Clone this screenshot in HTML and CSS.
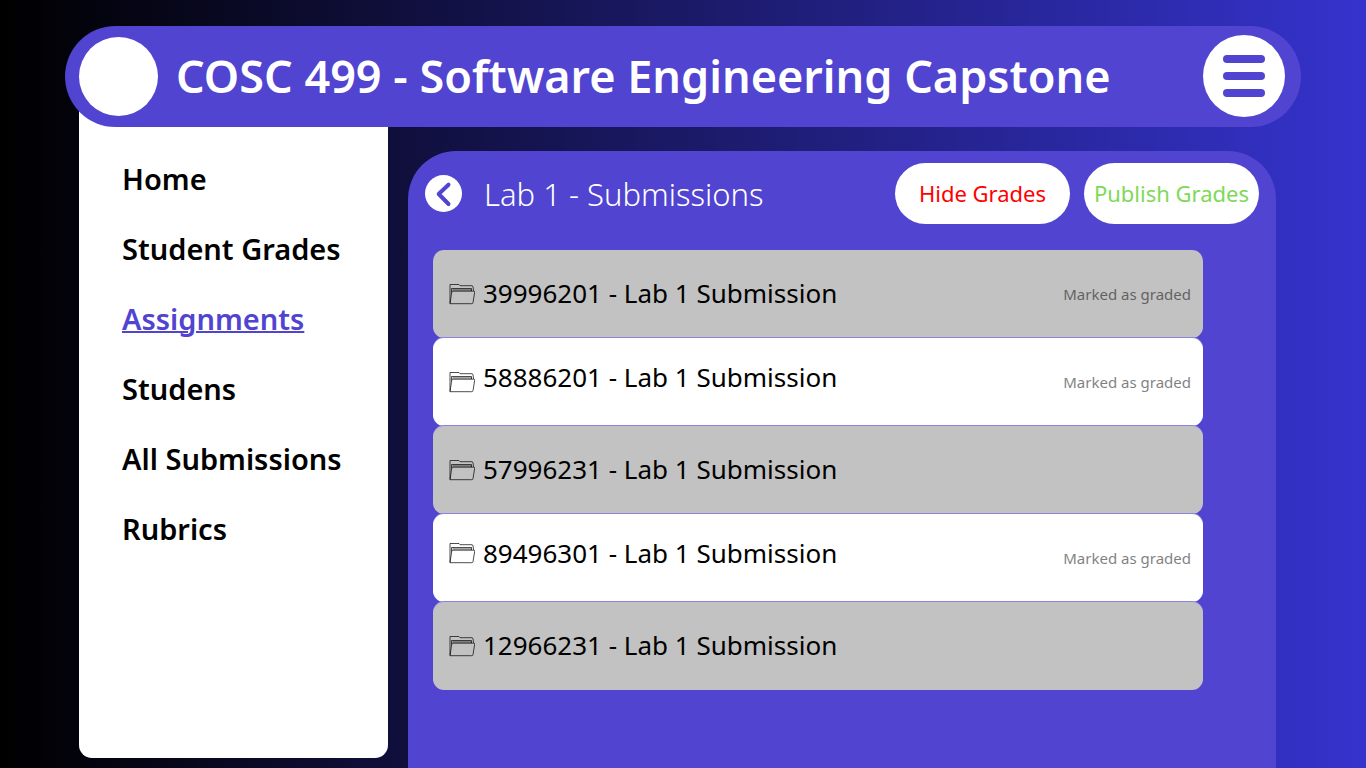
FILE: index.html
```html
<!DOCTYPE html>
<html lang="en">
<head>
<meta charset="utf-8">
<meta name="viewport" content="width=device-width, initial-scale=1">
<title>COSC 499 - Software Engineering Capstone</title>
<link rel="stylesheet" href="styles.css">
</head>
<body>
<svg class="sprite" aria-hidden="true">
  <symbol id="folder" viewBox="0 0 26 22">
    <g fill="none" stroke="currentColor" stroke-width="0.7" stroke-linejoin="round">
      <path d="M1 20.500V1.500H10l1 1.200h12q1 .2 1 1.200L24.600 8"/>
      <path d="M2.500 9.500V5.500h20V8"/>
      <path d="M3.500 7h19"/>
      <path d="M1 20.600 2.800 9q.2-.8 1-.8h21q1.100 0 .9 1L24 19.700q-.3 1-1.200 1H1"/>
    </g>
  </symbol>
</svg>
<header class="topbar">
  <span class="avatar"></span>
  <h1 class="title">COSC 499 - Software Engineering Capstone</h1>
  <button class="menu" type="button" aria-label="Menu">
    <span class="bar"></span><span class="bar"></span><span class="bar"></span>
  </button>
</header>
<div class="layout">
  <nav class="sidebar">
    <a class="link" href="#">Home</a>
    <a class="link" href="#">Student Grades</a>
    <a class="link link-active" href="#">Assignments</a>
    <a class="link" href="#">Studens</a>
    <a class="link" href="#">All Submissions</a>
    <a class="link" href="#">Rubrics</a>
  </nav>
  <main class="panel">
    <div class="panel-head">
      <button class="back" type="button" aria-label="Back">
        <svg viewBox="0 0 36 36" width="36" height="36"><path d="M22.500 8.700 12.700 18 22.500 28" fill="none" stroke="#5144d0" stroke-width="4" stroke-linecap="round" stroke-linejoin="round"/></svg>
      </button>
      <h2 class="subtitle">Lab 1 - Submissions</h2>
      <div class="actions">
        <button class="pill pill-hide" type="button">Hide Grades</button>
        <button class="pill pill-publish" type="button">Publish Grades</button>
      </div>
    </div>
    <ul class="list">
      <li class="row"><svg class="folder"><use href="#folder"/></svg><span class="name">39996201 - Lab 1 Submission</span><span class="status">Marked as graded</span></li>
      <li class="row row-light"><svg class="folder"><use href="#folder"/></svg><span class="name">58886201 - Lab 1 Submission</span><span class="status">Marked as graded</span></li>
      <li class="row"><svg class="folder"><use href="#folder"/></svg><span class="name">57996231 - Lab 1 Submission</span></li>
      <li class="row row-light row-raised"><svg class="folder"><use href="#folder"/></svg><span class="name">89496301 - Lab 1 Submission</span><span class="status">Marked as graded</span></li>
      <li class="row"><svg class="folder"><use href="#folder"/></svg><span class="name">12966231 - Lab 1 Submission</span></li>
    </ul>
  </main>
</div>
</body>
</html>
```
FILE: styles.css
```css
* { box-sizing: border-box; }
body {
  margin: 0;
  padding: 26px 65px 0;
  min-height: 100vh;
  display: flex;
  flex-direction: column;
  background: linear-gradient(90deg, #000, #3533cd);
  font-family: "Noto Sans", sans-serif;
  color: #000;
}
button { border: 0; padding: 0; font: inherit; cursor: pointer; }
.sprite { display: none; }
.topbar {
  position: relative;
  z-index: 1;
  display: flex;
  align-items: center;
  flex: none;
  padding: 9px 16px 10px 14px;
  border-radius: 51px;
  background: #5144d0;
}
.avatar { flex: none; width: 79px; height: 79px; border-radius: 50%; background: #fff; }
.title {
  flex: 1;
  margin: 0 0 0 18px;
  font-size: 45px;
  line-height: 60px;
  font-weight: 600;
  color: #fff;
  white-space: nowrap;
}
.menu {
  flex: none;
  display: flex;
  flex-direction: column;
  align-items: center;
  justify-content: center;
  gap: 9px;
  width: 82px;
  height: 82px;
  border-radius: 50%;
  background: #fff;
}
.bar { width: 42px; height: 8px; border-radius: 4px; background: #5144d0; }
.layout {
  flex: 1;
  display: flex;
  gap: 20px;
  margin: 0 25px 0 14px;
}
.sidebar {
  flex: none;
  width: 309px;
  margin: -50px 0 10px;
  padding: 82px 43px 0;
  display: flex;
  flex-direction: column;
  align-items: flex-start;
  gap: 30px;
  background: #fff;
  border-radius: 0 0 13px 13px;
}
.link { font-size: 29px; line-height: 40px; font-weight: 600; color: #000; text-decoration: none; white-space: nowrap; }
.link-active { color: #5144d0; text-decoration: underline; text-decoration-thickness: 2px; }
.panel {
  flex: 1;
  min-width: 0;
  margin-top: 24px;
  padding: 12px 17px 0;
  border-radius: 48px 48px 0 0;
  background: #5144d0;
}
.panel-head { display: flex; align-items: center; }
.back { flex: none; width: 37px; height: 37px; border-radius: 50%; background: #fff; display: grid; place-items: center; }
.subtitle { flex: 1; margin: 0 0 0 22px; font-size: 31px; line-height: 40px; font-weight: 300; color: #fff; white-space: nowrap; }
.actions { display: flex; gap: 14px; }
.pill { width: 175px; height: 61px; padding-bottom: 2px; border-radius: 31px; background: #fff; font-size: 22px; white-space: nowrap; }
.pill-hide { color: #f00; }
.pill-publish { color: #7ed957; }
.list { list-style: none; margin: 26px 56px 0 8px; padding: 0; }
.row {
  display: flex;
  align-items: center;
  height: 88px;
  padding: 0 12px 0 16px;
  border-radius: 11px;
  background: #c2c2c2;
}
.row + .row { box-shadow: 0 -1px #8a82de; }
.row-light { background: #fff; }
.folder { flex: none; width: 26px; height: 22px; }
.name { flex: 1; margin-left: 8px; padding-bottom: 2px; font-size: 26px; line-height: 36px; white-space: nowrap; }
.row-light .name { padding-bottom: 10px; }
.row-raised .folder { margin-bottom: 10px; }
.status { font-size: 15px; color: #000; opacity: 0.5; white-space: nowrap; }
```
